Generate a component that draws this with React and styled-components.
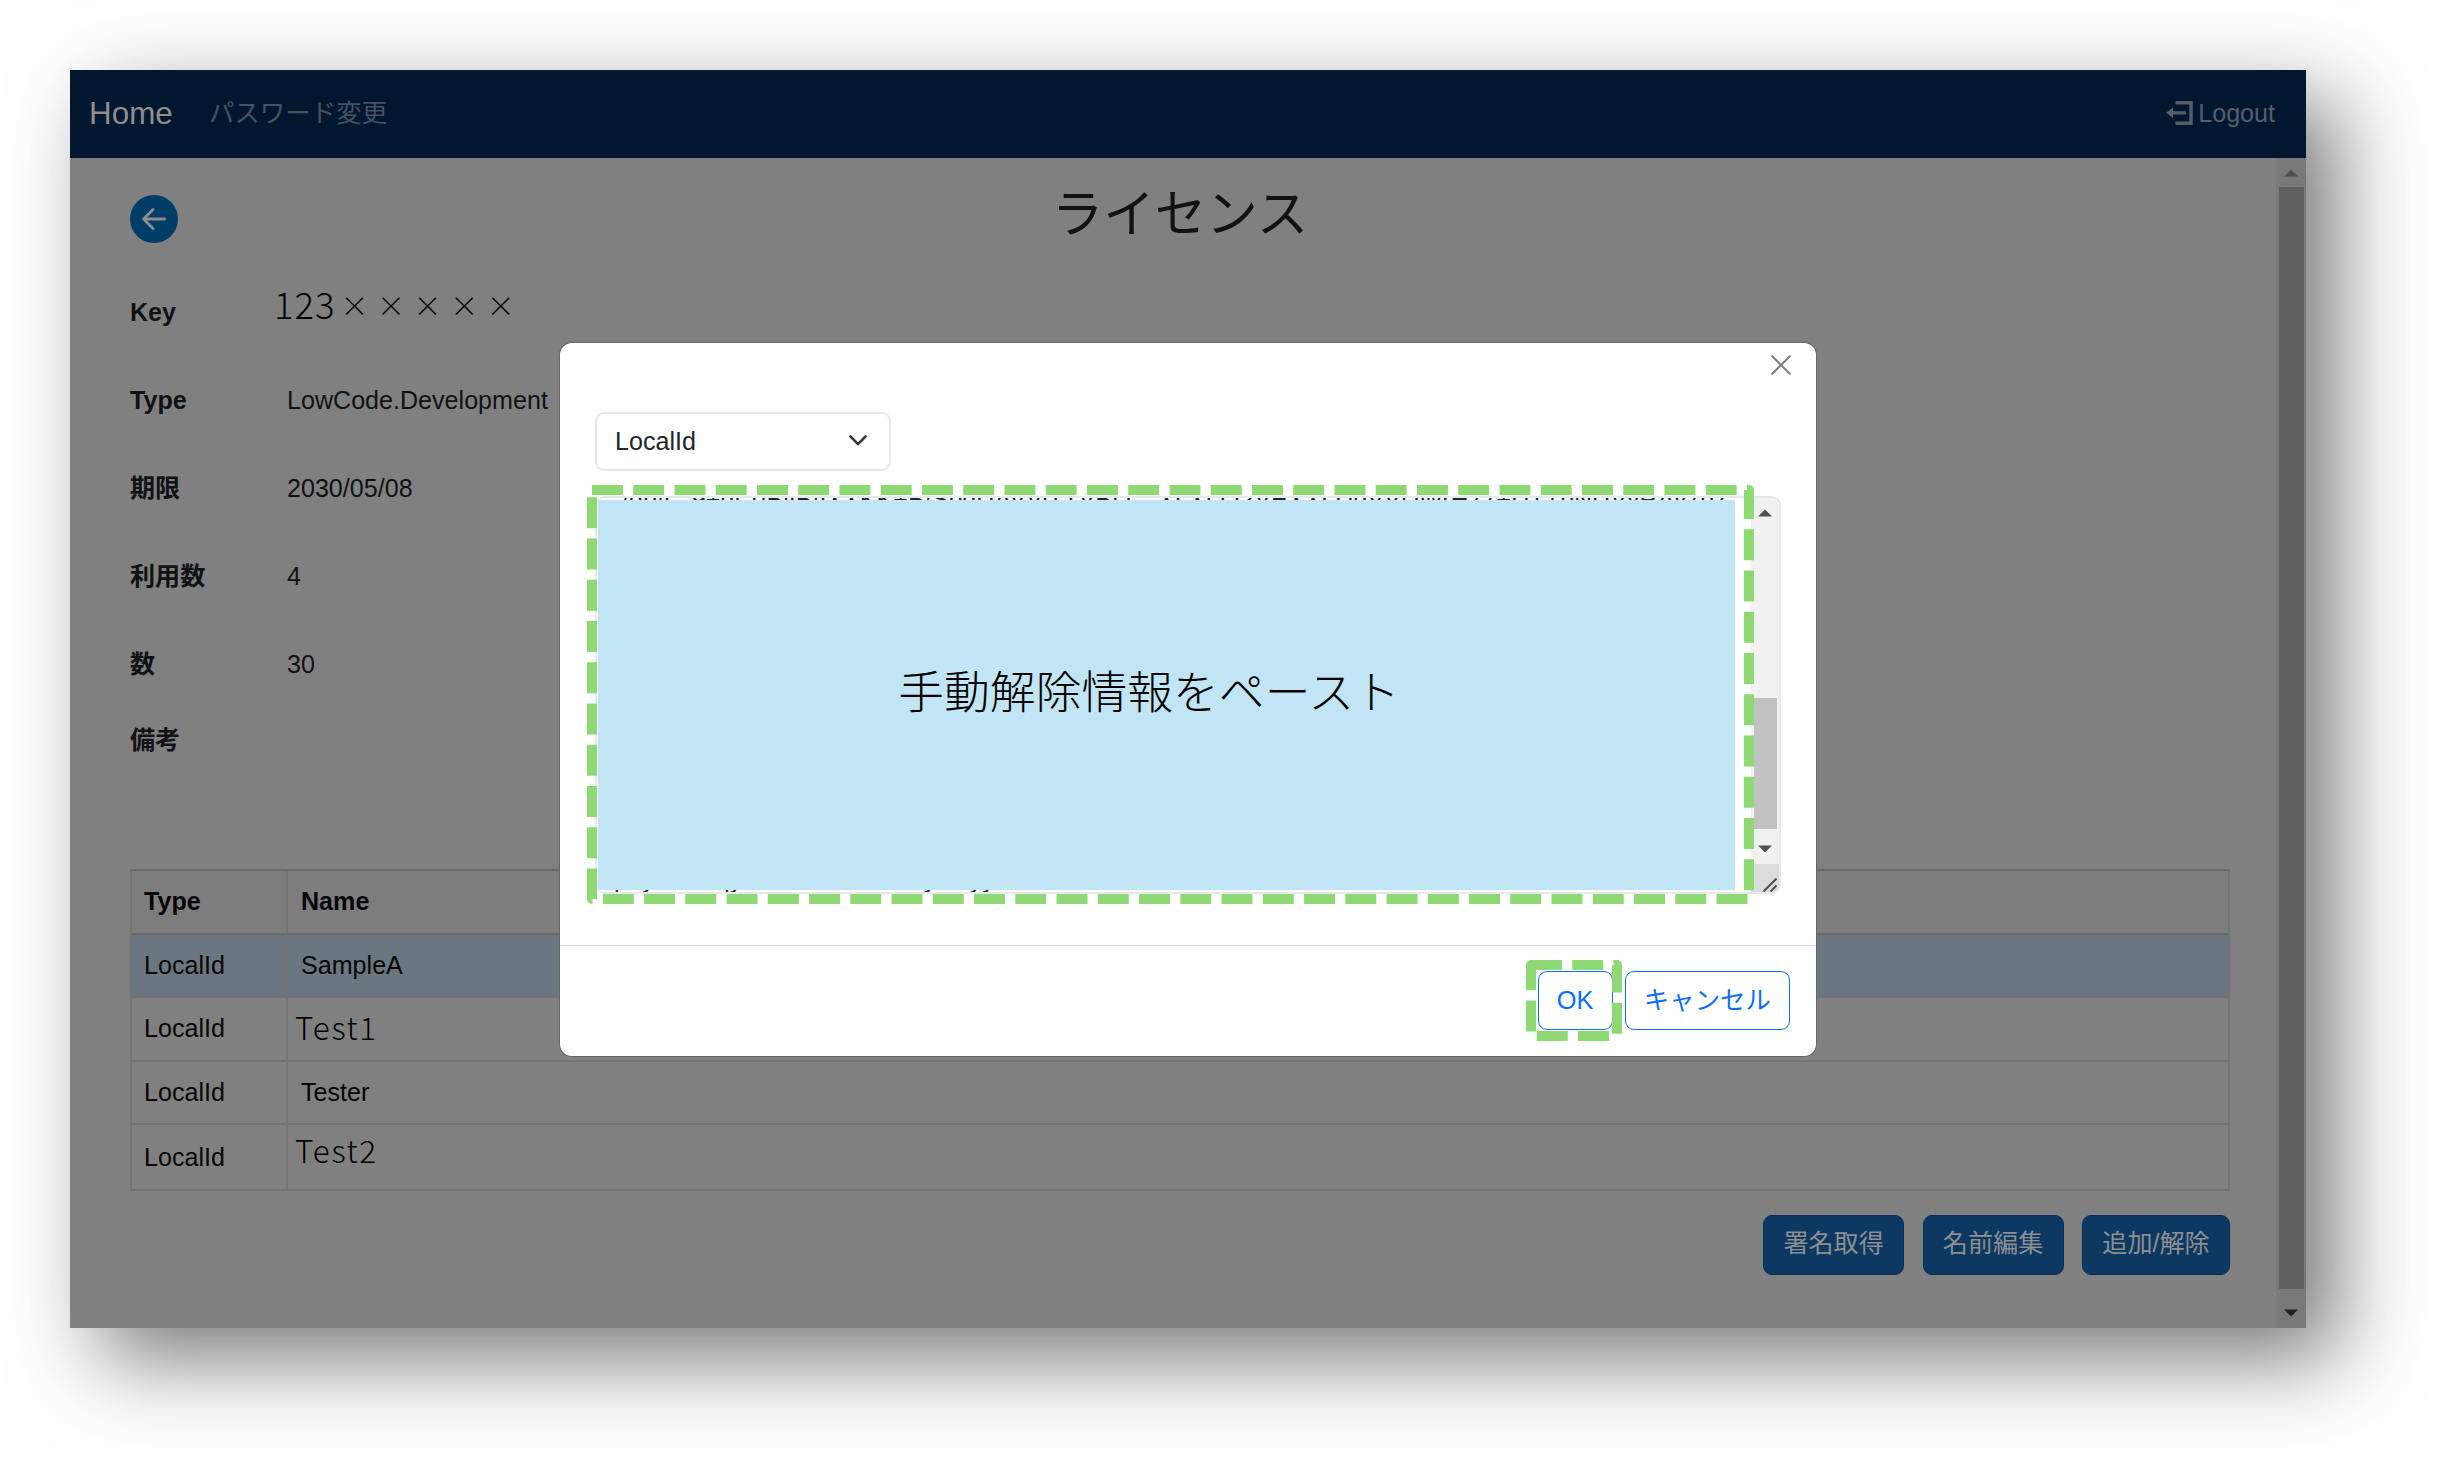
import React from "react";
import styled, { createGlobalStyle, css } from "styled-components";

const GlobalStyle = createGlobalStyle`
  * { box-sizing: border-box; }
  body {
    margin: 0;
    background: #fff;
    font-family: "Liberation Sans", "Noto Sans CJK JP", sans-serif;
    font-size: 25.1px;
    line-height: 38px;
    color: #101214;
  }
`;

const Stage = styled.div`
  width: 2448px;
  height: 1470px;
  padding: 70px;
  overflow: hidden;
`;

const Window = styled.div`
  position: relative;
  display: flex;
  flex-direction: column;
  width: 2236px;
  height: 1258px;
  background: #808080;
  box-shadow: 31px 31px 80px rgba(51, 51, 51, 0.65);
`;

const NavBar = styled.nav`
  display: flex;
  flex-shrink: 0;
  align-items: center;
  height: 88px;
  padding: 0 31px 0 19px;
  background: #00182f;
  border-bottom: 1px solid #00112a;
`;

const Brand = styled.a`
  font-size: 31.4px;
  color: #8e8e8e;
  padding-right: 36px;
`;

const NavLink = styled.a`
  padding-bottom: 1px;
  font-size: 25.5px;
  color: #465260;
`;

const Logout = styled.a`
  display: flex;
  align-items: center;
  gap: 5px;
  margin-left: auto;
  padding-bottom: 1px;
  color: #545e6a;
`;

const Content = styled.div`
  display: flex;
  flex: 1;
`;

const Main = styled.main`
  flex: 1;
  padding: 0 46px 0 60px;
`;

const PageHeader = styled.header`
  display: grid;
  grid-template-columns: 1fr auto 1fr;
  align-items: start;
  height: 110px;
`;

const BackButton = styled.button`
  display: flex;
  align-items: center;
  justify-content: center;
  width: 48px;
  height: 48px;
  margin: 37px 0 0;
  padding: 0;
  border: 0;
  border-radius: 50%;
  background: #003e68;
`;

const Title = styled.h1`
  margin: 26px 0 0;
  font-size: 51.5px;
  line-height: 60px;
  font-weight: 400;
`;

const Fields = styled.dl`
  margin: 0;
`;

const Field = styled.div`
  display: grid;
  grid-template-columns: 144px 1fr;
  align-items: center;
  height: ${(p) => (p.$short ? 63 : 88)}px;
`;

const Label = styled.dt`
  font-weight: 700;
`;

const note = css`
  font-family: "Noto Sans CJK JP", sans-serif;
  font-weight: 300;
  color: #000;
`;

const Value = styled.dd`
  margin: 0;
  padding-left: 13px;
`;

const NoteValue = styled.dd`
  ${note}
  margin: 0;
  padding-bottom: 16px;
  font-size: 36.6px;
  letter-spacing: 0.9px;
`;

const Mask = styled.span`
  margin-left: 5px;
  font-size: 28px;
  letter-spacing: 8.6px;
  line-height: 20px;
  vertical-align: 2px;
`;

const Table = styled.div`
  margin-top: 98px;
  border: 2px solid #727577;
  border-top-color: #696969;
  color: #060606;
`;

const Row = styled.div`
  display: grid;
  grid-template-columns: 154px 1fr;
  height: 63.6px;
  background: ${(p) => (p.$selected ? "#6b7680" : p.$head ? "#7d7d7d" : "transparent")};
  font-weight: ${(p) => (p.$head ? 700 : 400)};
  border-bottom: ${(p) => (p.$last ? "0" : p.$head ? "2px solid #696969" : "2px solid #727577")};
`;

const Cell = styled.div`
  display: flex;
  align-items: center;
  padding: 0 0 1px 12px;
  & + & {
    padding-left: 13px;
    border-left: 2px solid #727577;
  }
`;

const NoteText = styled.span`
  ${note}
  font-size: 31.5px;
  line-height: 40px;
  letter-spacing: 1.6px;
  margin-left: -6px;
  padding-bottom: ${(p) => p.$lift}px;
`;

const Actions = styled.div`
  display: flex;
  justify-content: flex-end;
  gap: 18.5px;
  margin-top: 24px;
`;

const ActionButton = styled.button`
  height: 60px;
  padding: 0 19.3px 4px;
  border: 1.5px solid #0b3058;
  border-radius: 9px;
  background: #0d3862;
  color: #8b8f92;
  font: inherit;
  line-height: 52px;
`;

const PageScrollbar = styled.div`
  display: flex;
  flex-direction: column;
  align-items: center;
  width: 30px;
  background: #797979;
`;

const PageThumb = styled.div`
  width: 25px;
  height: 1102px;
  background: #606060;
`;

const ArrowBox = styled.div`
  display: flex;
  flex-shrink: 0;
  align-items: center;
  justify-content: center;
  height: ${(p) => p.$h}px;
  padding-top: ${(p) => p.$pad || 0}px;
`;

const ModalLayer = styled.div`
  position: absolute;
  inset: 0;
  display: flex;
  justify-content: center;
  align-items: flex-start;
  padding-top: 273px;
`;

const Modal = styled.section`
  display: flex;
  flex-direction: column;
  width: 1256px;
  height: 713px;
  background: #fff;
  border-radius: 12px;
  box-shadow: 0 0 0 1px #666;
`;

const ModalHeader = styled.header`
  display: flex;
  justify-content: flex-end;
  height: 69px;
  padding: 12px 25px 0 0;
`;

const CloseButton = styled.button`
  width: 20px;
  height: 20px;
  padding: 0;
  border: 0;
  background: none;
  line-height: 0;
`;

const ModalBody = styled.div`
  flex: 1;
  padding: 0 35px;
`;

const Select = styled.div`
  display: flex;
  align-items: center;
  justify-content: space-between;
  width: 296px;
  height: 59px;
  padding: 0 22px 2px 18px;
  border: 2px solid #e6e9ec;
  border-radius: 9px;
  color: #212529;
`;

const TextArea = styled.div`
  position: relative;
  display: flex;
  width: 1186px;
  height: 398px;
  margin-top: 25px;
  border: 2px solid #e6e9ec;
  border-radius: 9px;
`;

const TextColumn = styled.div`
  display: flex;
  flex-direction: column;
  width: 1154px;
  padding-right: 16px;
  color: #212529;
`;

const Sliver = styled.div`
  display: flex;
  flex-shrink: 0;
  align-items: ${(p) => p.$align};
  height: ${(p) => p.$h}px;
  padding-left: ${(p) => p.$indent}px;
  overflow: hidden;
  white-space: nowrap;
  line-height: ${(p) => p.$line}px;
`;

const PasteArea = styled.div`
  ${note}
  display: flex;
  flex: 1;
  align-items: center;
  justify-content: center;
  margin-left: 1px;
  padding: 0 35px 12px 0;
  background: #c1e5f5;
  font-size: 45.8px;
`;

const TextScrollbar = styled.div`
  display: flex;
  flex-direction: column;
  align-items: center;
  width: 28px;
  background: #f1f1f1;
  border-radius: 0 7px 7px 0;
  overflow: hidden;
`;

const TextTrack = styled.div`
  display: flex;
  flex: 1;
  align-items: flex-end;
`;

const TextThumb = styled.div`
  width: 23px;
  height: 131px;
  background: #c1c1c1;
`;

const ResizeCorner = styled.div`
  display: flex;
  align-items: flex-end;
  justify-content: flex-end;
  width: 28px;
  height: 28px;
  padding: 0 2px 0 0;
  background: #dcdcdc;
`;

const ModalFooter = styled.footer`
  display: flex;
  justify-content: flex-end;
  gap: 12px;
  height: 111px;
  padding: 25px 26px 0 0;
  border-top: 1px solid #d9dde2;
`;

const OutlineButton = styled.button`
  height: 59px;
  padding: 0 18.2px 2px;
  border: 1.6px solid #0d6efd;
  border-radius: 9px;
  background: #fff;
  color: #0d6efd;
  font: inherit;
  font-size: 25.4px;
  line-height: 54px;
`;

const OkWrap = styled.div`
  position: relative;
`;

const Dashed = styled.svg`
  position: absolute;
  left: ${(p) => p.$x}px;
  top: ${(p) => p.$y}px;
  pointer-events: none;
`;

function DashedFrame({ x, y, w, h }) {
  return (
    <Dashed $x={x} $y={y} width={w} height={h}>
      <rect x="5" y="5" width={w - 10} height={h - 10} fill="none" stroke="#8ed973"
        strokeWidth="10" strokeLinejoin="round" strokeDasharray="30.94 10.31" />
    </Dashed>
  );
}

function Arrow({ down, color }) {
  return (
    <svg width="14" height="8" viewBox="0 0 14 8">
      <path d={down ? "M0 0.5h14L7 7.5z" : "M0 7.5h14L7 0.5z"} fill={color} />
    </svg>
  );
}

const fields = [
  { label: "Key", value: "123", masked: "×××××" },
  { label: "Type", value: "LowCode.Development" },
  { label: "期限", value: "2030/05/08" },
  { label: "利用数", value: "4" },
  { label: "数", value: "30" },
  { label: "備考", value: "", short: true },
];

const rows = [
  { type: "LocalId", name: "SampleA", selected: true },
  { type: "LocalId", name: "Test1", noted: true, lift: 5 },
  { type: "LocalId", name: "Tester" },
  { type: "LocalId", name: "Test2", noted: true, lift: 15 },
];

export default function App() {
  return (
    <>
      <GlobalStyle />
      <Stage>
        <Window>
          <NavBar>
            <Brand>Home</Brand>
            <NavLink>パスワード変更</NavLink>
            <Logout>
              <svg width="27" height="24" viewBox="0 0 27 24">
                <path d="M9.5 1.7H25v20.6H9.5" fill="none" stroke="currentColor" strokeWidth="3.4" />
                <path d="M0 11.8l7-5.2v3.6h13v3.2H7V17z" fill="currentColor" />
              </svg>
              Logout
            </Logout>
          </NavBar>
          <Content>
            <Main>
              <PageHeader>
                <BackButton>
                  <svg width="24" height="22" viewBox="0 0 24 22" fill="none" stroke="#8c8c8c"
                    strokeWidth="2.8" strokeLinecap="round" strokeLinejoin="round">
                    <path d="M22.5 11H2M11 1.5L1.6 11 11 20.5" />
                  </svg>
                </BackButton>
                <Title>ライセンス</Title>
              </PageHeader>
              <Fields>
                {fields.map((f) => (
                  <Field key={f.label} $short={f.short}>
                    <Label>{f.label}</Label>
                    {f.masked ? (
                      <NoteValue>
                        {f.value}
                        <Mask>{f.masked}</Mask>
                      </NoteValue>
                    ) : (
                      <Value>{f.value}</Value>
                    )}
                  </Field>
                ))}
              </Fields>
              <Table>
                <Row $head>
                  <Cell>Type</Cell>
                  <Cell>Name</Cell>
                </Row>
                {rows.map((r, i) => (
                  <Row key={i} $selected={r.selected} $last={i === rows.length - 1}>
                    <Cell>{r.type}</Cell>
                    <Cell>{r.noted ? <NoteText $lift={r.lift}>{r.name}</NoteText> : r.name}</Cell>
                  </Row>
                ))}
              </Table>
              <Actions>
                <ActionButton>署名取得</ActionButton>
                <ActionButton>名前編集</ActionButton>
                <ActionButton>追加/解除</ActionButton>
              </Actions>
            </Main>
            <PageScrollbar>
              <ArrowBox $h={29} $pad={1}><Arrow color="#505050" /></ArrowBox>
              <PageThumb />
              <ArrowBox $h={39} $pad={8}><Arrow down color="#202020" /></ArrowBox>
            </PageScrollbar>
          </Content>
          <ModalLayer>
            <Modal>
              <ModalHeader>
                <CloseButton>
                  <svg width="20" height="20" viewBox="0 0 20 20" stroke="#808080" strokeWidth="2" strokeLinecap="round">
                    <path d="M1.2 1.2l17.6 17.6M18.8 1.2L1.2 18.8" />
                  </svg>
                </CloseButton>
              </ModalHeader>
              <ModalBody>
                <Select>
                  LocalId
                  <svg width="18" height="11" viewBox="0 0 18 11" fill="none" stroke="#343a40"
                    strokeWidth="2.6" strokeLinecap="round" strokeLinejoin="round">
                    <path d="M1.5 1.5L9 9.2l7.5-7.7" />
                  </svg>
                </Select>
                <TextArea>
                  <TextColumn>
                    <Sliver $align="center" $indent={25} $line={24} $h={2}>
                      /gb/L_9+gLTiBlIB/IXXKK+B/SpgUAVViTTVBLC_XLXLLI2VEXXLUgVVDWrH77+UTTpNUVvRAv7q7
                    </Sliver>
                    <PasteArea>手動解除情報をペースト</PasteArea>
                    <Sliver $align="flex-end" $indent={17} $line={25} $h={2}>
                      p1y7n4eiqy8bu3dn0h5aeL2y4niyy
                    </Sliver>
                  </TextColumn>
                  <TextScrollbar>
                    <ArrowBox $h={30}><Arrow color="#505050" /></ArrowBox>
                    <TextTrack><TextThumb /></TextTrack>
                    <ArrowBox $h={35} $pad={4}><Arrow down color="#505050" /></ArrowBox>
                    <ResizeCorner>
                      <svg width="14" height="14" viewBox="0 0 14 14" stroke="#505050" strokeWidth="2">
                        <path d="M0.5 13.5l13-13M7.5 13.5l6-6" />
                      </svg>
                    </ResizeCorner>
                  </TextScrollbar>
                  <DashedFrame x={-10} y={-13} w={1167} h={419} />
                </TextArea>
              </ModalBody>
              <ModalFooter>
                <OkWrap>
                  <OutlineButton>OK</OutlineButton>
                  <DashedFrame x={-12} y={-11} w={96} h={81} />
                </OkWrap>
                <OutlineButton>キャンセル</OutlineButton>
              </ModalFooter>
            </Modal>
          </ModalLayer>
        </Window>
      </Stage>
    </>
  );
}
